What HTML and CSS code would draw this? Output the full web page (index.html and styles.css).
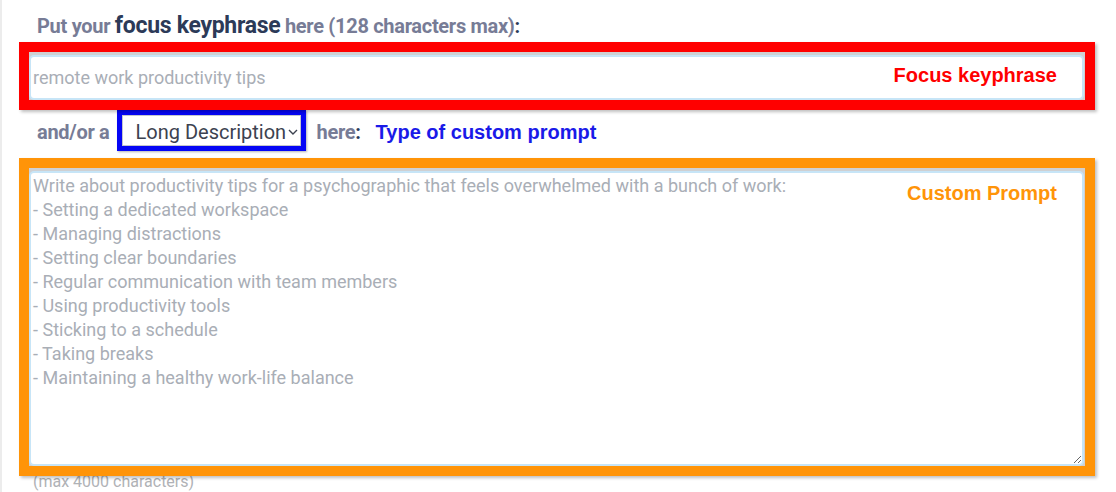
FILE: index.html
```html
<!DOCTYPE html>
<html lang="en">
<head>
  <meta charset="UTF-8" />
  <title>Custom Prompt Settings</title>
  <link rel="stylesheet" href="styles.css">
</head>
<body>
<div class="prompt-form">
  <label class="field-label" for="focusKeyphrase">
    Put your <span class="strong">focus keyphrase</span> here (128 characters max)<span class="colon">:</span>
  </label>
  <div class="mark mark-red">
    <input type="text" id="focusKeyphrase" class="text-input" placeholder="remote work productivity tips">
    <span class="mark-note note-red">Focus keyphrase</span>
  </div>

  <div class="type-row">
    <span class="field-label inline">and/or a</span>
    <div class="mark-blue">
      <select id="promptType" class="type-select">
        <option>Long Description</option>
        <option>Short Description</option>
        <option>Blog Post</option>
      </select>
      <svg class="chevron" width="10" height="6" viewBox="0 0 10 6"><path d="M1 1l4 4 4-4" fill="none" stroke="#3c4250" stroke-width="1.4"/></svg>
    </div>
    <span class="field-label inline">here<span class="colon">:</span></span>
    <span class="note-blue">Type of custom prompt</span>
  </div>

  <div class="mark mark-orange">
    <textarea id="customPrompt" class="text-area" placeholder="Write about productivity tips for a psychographic that feels overwhelmed with a bunch of work:
- Setting a dedicated workspace
- Managing distractions
- Setting clear boundaries
- Regular communication with team members
- Using productivity tools
- Sticking to a schedule
- Taking breaks
- Maintaining a healthy work-life balance"></textarea>
    <span class="mark-note note-orange">Custom Prompt</span>
  </div>
  <div class="hint">(max 4000 characters)</div>
</div>
</body>
</html>
```

FILE: styles.css
```css
body {
  margin: 0;
  min-height: 492px;
  border-left: 2px solid #ececec;
  font-family: Roboto, "Liberation Sans", sans-serif;
  background: #fff;
  overflow: hidden;
}
.prompt-form {
  padding-top: 13px;
}
.field-label {
  display: block;
  margin-left: 35px;
  font-size: 20px;
  line-height: 26px;
  font-weight: 700;
  color: #777c96;
  letter-spacing: -0.3px;
}
.field-label .strong {
  font-size: 23px;
  color: #2c3a58;
}
.colon {
  color: #2c3a58;
}
.field-label.inline {
  display: inline-block;
  margin-left: 0;
  margin-top: 3px;
}
.mark {
  position: relative;
  z-index: 1;
  box-sizing: border-box;
  width: 1076px;
  margin-left: 17px;
  background: #cfd0d2;
  padding: 3px 1px 1px 0;
  box-shadow: 2px 2px 3px rgba(0,0,0,0.25);
}
.mark-red {
  margin-top: 3px;
  height: 68px;
  border: 10px solid #ff0000;
}
.mark-orange {
  margin-top: 7px;
  height: 318px;
  border: 10px solid #ff9408;
}
.text-input, .text-area {
  display: block;
  box-sizing: border-box;
  width: 100%;
  margin: 0;
  border: 2px solid #c7e5f7;
  border-radius: 5px;
  background: #fff;
  font-family: Roboto, sans-serif;
  font-size: 18px;
  outline: none;
}
.text-input {
  height: 45px;
  padding: 0 2px;
}
.text-area {
  height: 295px;
  padding: 1px 2px;
  line-height: 24px;
  resize: vertical;
}
.text-input::placeholder, .text-area::placeholder {
  color: #a9aeb6;
}
.mark-note {
  position: absolute;
  right: 28px;
  font-family: "Liberation Sans", Arial, sans-serif;
  font-size: 20px;
  font-weight: 700;
}
.note-red {
  top: 12px;
  color: #ff0000;
}
.note-orange {
  top: 14px;
  color: #ff9408;
}
.type-row {
  display: flex;
  align-items: center;
  height: 41px;
  padding-left: 35px;
}
.mark-blue {
  position: relative;
  box-sizing: border-box;
  width: 189px;
  height: 41px;
  margin: 0 10px 0 8px;
  border: 5px solid #0505f5;
  box-shadow: 1px 1px 2px rgba(0,0,0,0.3);
}
.type-select {
  appearance: none;
  -webkit-appearance: none;
  box-sizing: border-box;
  width: 100%;
  height: 100%;
  margin: 0;
  padding: 2px 0 0 12px;
  border: 1px solid #c4c6cc;
  background: #fff;
  font-family: Roboto, sans-serif;
  font-size: 20px;
  color: #3c4250;
}
.chevron {
  position: absolute;
  right: 3px;
  top: 14px;
  pointer-events: none;
}
.note-blue {
  margin: 3px 0 0 15px;
  font-family: "Liberation Sans", Arial, sans-serif;
  font-size: 20px;
  font-weight: 700;
  color: #1a1ae8;
}
.hint {
  margin: -4px 0 0 31px;
  font-size: 16px;
  line-height: 20px;
  color: #b0b2b6;
}
```
